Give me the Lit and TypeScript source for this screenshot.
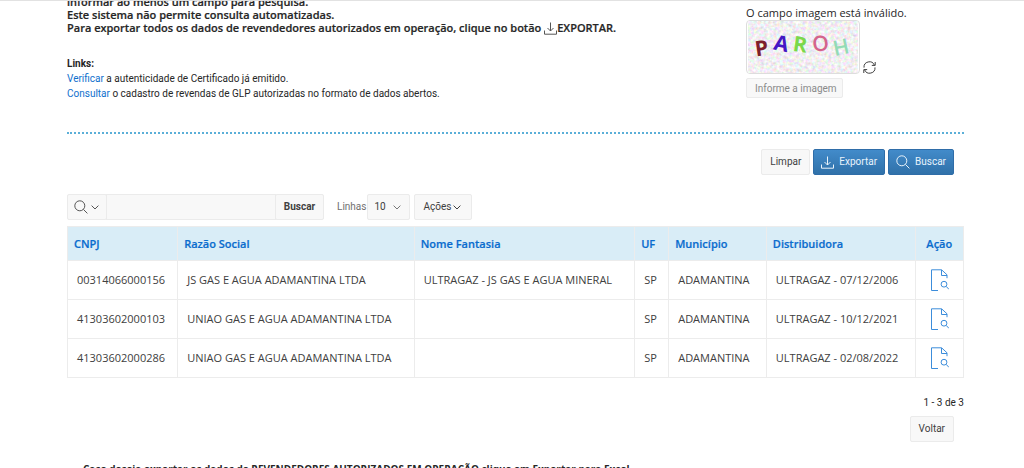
import { LitElement, html, css, svg } from "lit";
import { customElement, state } from "lit/decorators.js";

interface Dealer {
  cnpj: string;
  name: string;
  brand: string;
  uf: string;
  city: string;
  distributor: string;
}

const DEALERS: Dealer[] = [
  { cnpj: "00314066000156", name: "JS GAS E AGUA ADAMANTINA LTDA", brand: "ULTRAGAZ - JS GAS E AGUA MINERAL", uf: "SP", city: "ADAMANTINA", distributor: "ULTRAGAZ - 07/12/2006" },
  { cnpj: "41303602000103", name: "UNIAO GAS E AGUA ADAMANTINA LTDA", brand: "", uf: "SP", city: "ADAMANTINA", distributor: "ULTRAGAZ - 10/12/2021" },
  { cnpj: "41303602000286", name: "UNIAO GAS E AGUA ADAMANTINA LTDA", brand: "", uf: "SP", city: "ADAMANTINA", distributor: "ULTRAGAZ - 02/08/2022" },
];

const download = html`<svg class="icon" width="13" height="13" viewBox="0 0 13 13" aria-hidden="true">
  ${svg`<path d="M6.5 0.5V9M3.5 6L6.5 9L9.5 6M0.5 8.5V12.2H12.5V8.5" />`}
</svg>`;

const magnifier = html`<svg class="icon" width="14" height="14" viewBox="0 0 14 14" aria-hidden="true">
  ${svg`<circle cx="5.8" cy="5.8" r="5" /><path d="M9.4 9.4L13.4 13.4" />`}
</svg>`;

const chevron = html`<svg class="icon" width="8" height="5" viewBox="0 0 8 5" aria-hidden="true">
  ${svg`<path d="M0.6 0.6L4 4L7.4 0.6" />`}
</svg>`;

const documentSearch = html`<svg class="icon" width="20" height="22" viewBox="0 0 20 22" aria-hidden="true">
  ${svg`<path d="M9 21.5H2.5V0.8H12.6L18 5.8V9.2" /><path d="M12.5 1V6.5H18" />
  <circle cx="15" cy="15.2" r="2.9" /><path d="M17.2 17.4L20 20.4" />`}
</svg>`;

const refresh = html`<svg class="icon" width="13" height="13" viewBox="0 0 13 13" aria-hidden="true">
  ${svg`<path d="M1 6.6A5.4 5.4 0 0 1 11.4 4.2M12 6.4A5.4 5.4 0 0 1 1.6 8.8" />
  <path d="M12.2 1V4.4H8.8M0.8 12V8.6H4.2" />`}
</svg>`;

@customElement("app-root")
export class AppRoot extends LitElement {
  @state() private rows = "10";

  static styles = css`
    :host {
      display: block;
      height: 100vh;
      overflow: hidden;
      background: #fff;
      color: #262626;
      font: 11px/14px "Open Sans", "Noto Sans", sans-serif;
    }
    * { box-sizing: border-box; }
    a { color: #0f70cd; text-decoration: none; }
    p { margin: 0; }
    .icon { display: block; flex: none; fill: none; stroke: currentColor; }
    .page { border-top: 1px solid #e2e2e2; overflow: hidden; padding: 0 60px 0 67px; }
    .intro { display: flex; justify-content: space-between; border-bottom: 2px dotted #5bafd8; height: 133px; }
    .notice { margin-top: -6px; font-weight: 600; line-height: 13px; -webkit-text-stroke: 0.2px; }
    .notice .icon { display: inline-block; vertical-align: -3px; stroke: #555; }
    .links { margin-top: 21px; font-family: Roboto, sans-serif; font-size: 10px; line-height: 15px; }
    .links strong { display: block; }
    .captcha { width: 218px; display: flex; flex-direction: column; align-items: flex-start; padding-top: 5px; }
    .challenge { display: flex; align-items: flex-end; gap: 3px; }
    .picture { display: block; border-radius: 4px; border: 1px solid #ddd; }
    button, input, select { font: 10px/14px Roboto, sans-serif; color: #404040; background: #f8f8f8; border: 1px solid #ebebeb; border-radius: 2px; }
    .captcha input { width: 97px; height: 20px; margin-top: 4px; padding: 0 4px 0 8px; }
    input::placeholder { color: #8a8a8a; opacity: 1; }
    button { display: inline-flex; align-items: center; justify-content: center; height: 26px; padding: 0 8px; }
    .plain { padding: 0; border: 0; height: auto; background: none; }
    .actions { display: flex; justify-content: flex-end; gap: 3px; padding: 15px 10px 0 0; }
    .actions .primary { gap: 5px; padding: 0 7px; color: #e9f3fb; border-color: #2f6da8; background: linear-gradient(#428bca, #3071a9); }
    .toolbar { display: flex; align-items: center; padding-top: 19px; }
    .search { display: flex; }
    .search input { width: 170px; height: 26px; border-radius: 0; margin: 0 -1px; padding: 0 8px; }
    .search .menu { width: 40px; gap: 3px; padding: 0 2px 0 0; color: #555; }
    .search .go { width: 49px; font-weight: 700; }
    .toolbar label { margin-left: 13px; font: 10px/14px Roboto, sans-serif; color: #707070; }
    .rows { display: grid; align-items: center; margin: 0 4px 0 1px; }
    .rows select, .rows .icon { grid-area: 1 / 1; }
    .rows select { appearance: none; width: 43px; height: 26px; padding: 0 6px; }
    .rows .icon { justify-self: end; margin-right: 9px; pointer-events: none; stroke: #777; }
    .toolbar .more { gap: 2px; padding: 0 10px 0 8px; }
    table { width: 100%; margin-top: 6px; table-layout: fixed; border-collapse: collapse; color: #404040; }
    th, td { border: 1px solid #ececec; text-align: left; white-space: nowrap; }
    th { height: 34px; padding: 0 6px; background: #d9edf7; font-weight: 600; -webkit-text-stroke: 0.2px; }
    th a { color: #0a6cce; }
    td { height: 39px; padding: 0 9px; }
    .action { text-align: center; padding: 0; }
    td.action a { display: inline-block; vertical-align: middle; color: #3c8ddb; }
    .c-cnpj { width: 12.3%; }
    .c-name { width: 26.4%; }
    .c-brand { width: 24.6%; }
    .c-uf { width: 3.8%; }
    .c-city { width: 10.9%; }
    .c-dist { width: 16.6%; }
    .c-act { width: 5.4%; }
    .pager { margin-top: 18px; text-align: right; font-family: Roboto, sans-serif; font-size: 10px; }
    .back { display: flex; justify-content: flex-end; padding: 6px 10px 0 0; }
    .tip { margin: 20px 0 0 16px; font-size: 10px; font-weight: 700; }
  `;

  render() {
    return html`
      <main class="page">
        <section class="intro">
          <div>
            <p class="notice">
              informar ao menos um campo para pesquisa.<br />
              Este sistema não permite consulta automatizadas.<br />
              Para exportar todos os dados de revendedores autorizados em operação, clique no botão ${download}EXPORTAR.
            </p>
            <p class="links">
              <strong>Links:</strong>
              <a href="#verificar">Verificar</a> a autenticidade de Certificado já emitido.<br />
              <a href="#consultar">Consultar</a> o cadastro de revendas de GLP autorizadas no formato de dados abertos.
            </p>
          </div>
          <div class="captcha">
            <label for="captcha">O campo imagem está inválido.</label>
            <div class="challenge">
              <svg class="picture" width="114" height="54" viewBox="0 0 114 54" role="img" aria-label="Imagem de verificação">
                <filter id="speckle" x="0" y="0" width="100%" height="100%" color-interpolation-filters="sRGB">
                  <feTurbulence type="fractalNoise" baseFrequency="0.3" numOctaves="2" seed="4" />
                  <feColorMatrix values="0.35 0 0 0 0.77  0 0.35 0 0 0.76  0 0 0.35 0 0.77  0 0 0 0 1" />
                </filter>
                <rect width="114" height="54" filter="url(#speckle)" />
                <g font-size="22" font-weight="700" text-anchor="middle">
                  <text transform="translate(15 36) rotate(-8)" fill="#7d1f2b">P</text>
                  <text transform="translate(33 31) rotate(12)" fill="#4517c4">A</text>
                  <text transform="translate(53 32) rotate(8)" fill="#7bd84a">R</text>
                  <text transform="translate(76 31) rotate(-6)" font-weight="600" fill="#d4648c">O</text>
                  <text transform="translate(98 35) rotate(-12)" font-weight="600" fill="#93dbb5">H</text>
                </g>
              </svg>
              <button class="plain" aria-label="Atualizar imagem">${refresh}</button>
            </div>
            <input id="captcha" type="text" placeholder="Informe a imagem" />
          </div>
        </section>

        <div class="actions">
          <button>Limpar</button>
          <button class="primary">${download}Exportar</button>
          <button class="primary">${magnifier}Buscar</button>
        </div>

        <div class="toolbar">
          <div class="search">
            <button class="menu" aria-label="Selecionar colunas">${magnifier}${chevron}</button>
            <input type="text" aria-label="Pesquisar" />
            <button class="go">Buscar</button>
          </div>
          <label for="rows">Linhas</label>
          <div class="rows">
            <select id="rows" .value=${this.rows} @change=${(e: Event) => (this.rows = (e.target as HTMLSelectElement).value)}>
              <option>10</option>
              <option>50</option>
              <option>100</option>
            </select>
            ${chevron}
          </div>
          <button class="more">Ações ${chevron}</button>
        </div>

        <table>
          <thead>
            <tr>
              <th class="c-cnpj"><a href="#cnpj">CNPJ</a></th>
              <th class="c-name"><a href="#razao">Razão Social</a></th>
              <th class="c-brand"><a href="#fantasia">Nome Fantasia</a></th>
              <th class="c-uf"><a href="#uf">UF</a></th>
              <th class="c-city"><a href="#municipio">Município</a></th>
              <th class="c-dist"><a href="#distribuidora">Distribuidora</a></th>
              <th class="c-act action"><a href="#acao">Ação</a></th>
            </tr>
          </thead>
          <tbody>
            ${DEALERS.map(
              (d) => html`<tr>
                <td>${d.cnpj}</td>
                <td>${d.name}</td>
                <td>${d.brand}</td>
                <td>${d.uf}</td>
                <td>${d.city}</td>
                <td>${d.distributor}</td>
                <td class="action"><a href="#detalhe-${d.cnpj}" aria-label="Ver detalhes">${documentSearch}</a></td>
              </tr>`
            )}
          </tbody>
        </table>

        <p class="pager">1 - 3 de 3</p>
        <div class="back"><button>Voltar</button></div>
        <p class="tip">Caso deseja exportar os dados de REVENDEDORES AUTORIZADOS EM OPERAÇÃO clique em Exportar para Excel.</p>
      </main>
    `;
  }
}
